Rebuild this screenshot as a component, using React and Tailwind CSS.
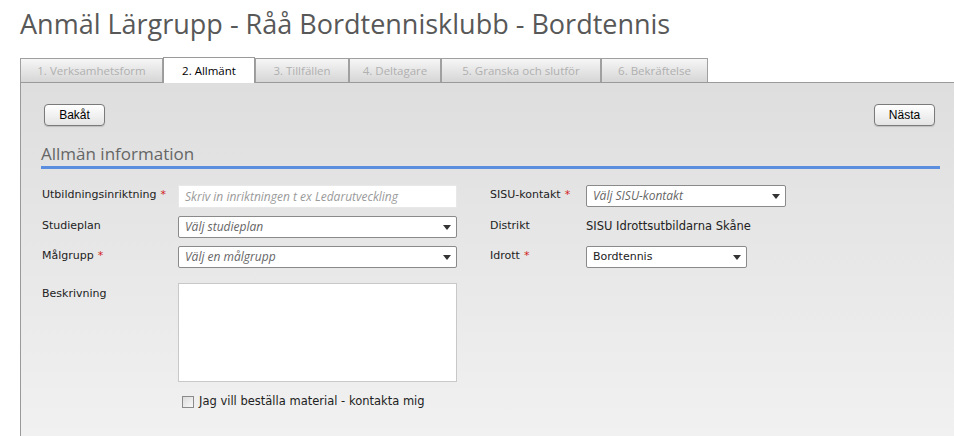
import React from "react";

const Arrow = () => (
  <svg width="8" height="5" viewBox="0 0 8 5" className="shrink-0">
    <path d="M0 0 H8 L4 5 Z" fill="#333" />
  </svg>
);

const Select = ({ text, italic = true, w }) => (
  <div
    className={`flex h-[22px] items-center justify-between rounded-[2px] border border-[#8a8a8a] bg-white pl-[6px] pr-[5px] ${w}`}
  >
    <span
      className={`${italic ? "text-[12px] italic text-[#666] font-['Open_Sans',sans-serif]" : "text-[11px] text-[#222] font-['DejaVu_Sans',sans-serif]"}`}
    >
      {text}
    </span>
    <Arrow />
  </div>
);

const Label = ({ children, req }) => (
  <div className="pt-[2px] font-['DejaVu_Sans',Verdana,sans-serif] text-[11px] text-[#222]">
    {children}
    {req && <span className="ml-[4px] text-[#d02020]">*</span>}
  </div>
);

const tabs = [
  { t: "1. Verksamhetsform", w: "w-[143px]" },
  { t: "2. Allmänt", w: "w-[92px]", active: true },
  { t: "3. Tillfällen", w: "w-[94px]" },
  { t: "4. Deltagare", w: "w-[92px]" },
  { t: "5. Granska och slutför", w: "w-[160px]" },
  { t: "6. Bekräftelse", w: "w-[107px]" },
];

const Btn = ({ children }) => (
  <button className="h-[22px] w-[61px] rounded-[4px] border border-[#7a7a7a] bg-gradient-to-b from-white to-[#e4e4e4] font-['Liberation_Sans',Arial,sans-serif] text-[12px] text-black shadow-[0_1px_1px_rgba(0,0,0,0.15)]">
    {children}
  </button>
);

export default function App() {
  return (
    <div className="flex h-[436px] w-[954px] flex-col overflow-hidden bg-white pl-[20px]">
      <div className="h-[58px] pt-[5px]">
        <h1 className="font-['Open_Sans',sans-serif] text-[27px] leading-[38px] text-[#585858]">
          Anmäl Lärgrupp - Råå Bordtennisklubb - Bordtennis
        </h1>
      </div>
      <div className="relative z-10 flex h-[24px] font-['Open_Sans',sans-serif]">
        {tabs.map((tab) =>
          tab.active ? (
            <div
              key={tab.t}
              className={`${tab.w} -mb-px -mt-px flex h-[26px] items-center justify-center border-x border-t border-[#9a9a9a] bg-white text-[11.5px] text-black`}
            >
              {tab.t}
            </div>
          ) : (
            <div
              key={tab.t}
              className={`${tab.w} flex h-[24px] items-center justify-center border-x border-t border-[#a0a0a0] bg-gradient-to-b from-[#f6f6f6] to-[#d6d6d6] text-[11.5px] text-[#b0b0b0]`}
            >
              {tab.t}
            </div>
          )
        )}
      </div>
      <div className="flex flex-1 flex-col border-l border-t border-[#9a9a9a] bg-gradient-to-b from-[#dedede] to-[#f1f1f1] pl-[20px] pr-[14px] pt-[21px]">
        <div className="flex justify-between pl-[3px] pr-[5px]">
          <Btn>Bakåt</Btn>
          <Btn>Nästa</Btn>
        </div>
        <div className="mt-[17px] border-b-[3px] border-[#5b8ede] pb-[1px]">
          <h2 className="font-['Open_Sans',sans-serif] text-[17px] leading-[22px] text-[#666]">
            Allmän information
          </h2>
        </div>
        <div className="mt-[16px] flex pl-[1px]">
          <div className="flex w-[448px] flex-col">
            <div className="flex">
              <div className="w-[136px]"><Label req>Utbildningsinriktning</Label></div>
              <div className="flex h-[23px] w-[279px] items-center border border-[#e8e8e8] bg-white pl-[6px]">
                <span className="font-['Open_Sans',sans-serif] text-[12px] italic text-[#9a9a9a]">
                  Skriv in inriktningen t ex Ledarutveckling
                </span>
              </div>
            </div>
            <div className="mt-[8px] flex">
              <div className="w-[136px]"><Label>Studieplan</Label></div>
              <Select text="Välj studieplan" w="w-[279px]" />
            </div>
            <div className="mt-[8px] flex">
              <div className="w-[136px]"><Label req>Målgrupp</Label></div>
              <Select text="Välj en målgrupp" w="w-[279px]" />
            </div>
            <div className="mt-[15px] flex">
              <div className="w-[136px] pt-[1px]"><Label>Beskrivning</Label></div>
              <div className="h-[99px] w-[279px] border border-[#c8c8c8] bg-white" />
            </div>
            <div className="mt-[11px] flex items-center pl-[140px]">
              <div className="h-[12px] w-[12px] border border-[#8a8a8a] bg-gradient-to-br from-[#dcdcdc] to-[#f8f8f8]" />
              <span className="ml-[5px] font-['DejaVu_Sans',Verdana,sans-serif] text-[11.5px] text-[#222]">
                Jag vill beställa material - kontakta mig
              </span>
            </div>
          </div>
          <div className="flex flex-col">
            <div className="flex">
              <div className="w-[96px]"><Label req>SISU-kontakt</Label></div>
              <Select text="Välj SISU-kontakt" w="w-[200px]" />
            </div>
            <div className="mt-[9px] flex">
              <div className="w-[96px]"><Label>Distrikt</Label></div>
              <div className="pt-[2px] font-['DejaVu_Sans',Verdana,sans-serif] text-[11.5px] text-[#222]">
                SISU Idrottsutbildarna Skåne
              </div>
            </div>
            <div className="mt-[11px] flex">
              <div className="w-[96px]"><Label req>Idrott</Label></div>
              <Select text="Bordtennis" italic={false} w="w-[161px]" />
            </div>
          </div>
        </div>
      </div>
    </div>
  );
}
